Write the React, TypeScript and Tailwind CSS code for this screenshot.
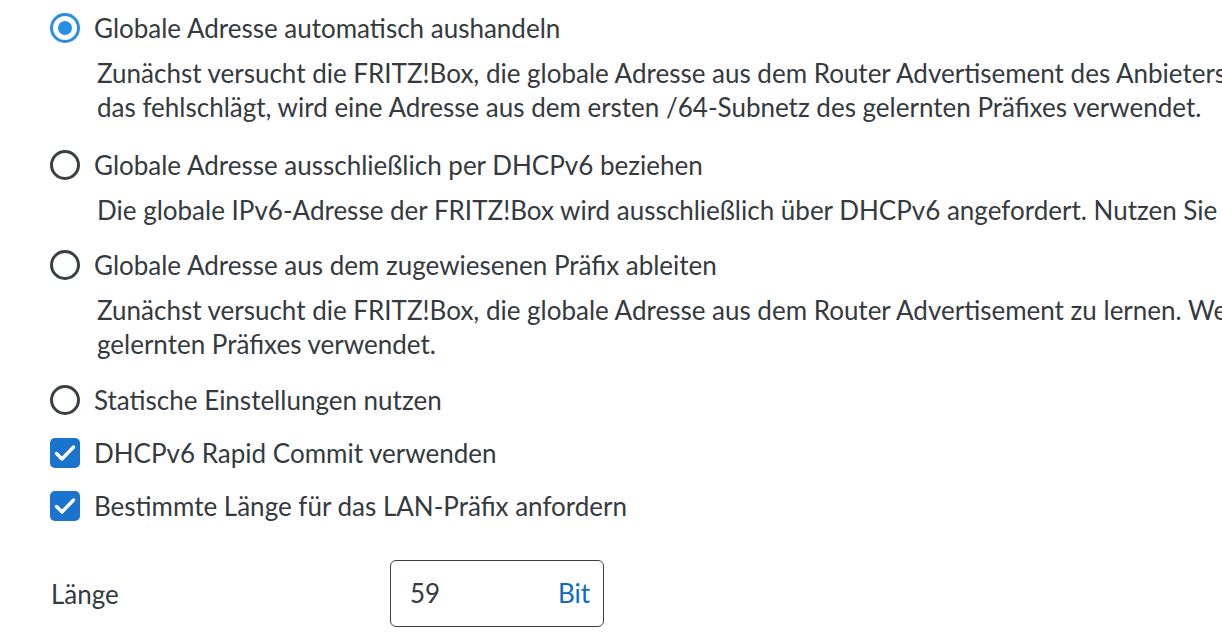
const font = { fontFamily: 'Lato, "Noto Sans", sans-serif' };

function Radio({ checked }: { checked?: boolean }) {
  return (
    <span className={`flex h-[30px] w-[30px] shrink-0 items-center justify-center rounded-full border-[3px] ${checked ? "border-[#2a8ee2]" : "border-[#3a3f45]"}`}>
      {checked && <span className="h-[14px] w-[14px] rounded-full bg-[#2a8ee2]" />}
    </span>
  );
}

function Checkbox() {
  return (
    <span className="flex h-[30px] w-[30px] shrink-0 items-center justify-center rounded-[5px] bg-[#1a73cc]">
      <svg width="26" height="26" viewBox="0 0 26 26" fill="none">
        <path d="M4.5 13.5l5.5 5.5L21.5 7" stroke="white" strokeWidth="3.4" strokeLinecap="round" strokeLinejoin="round" />
      </svg>
    </span>
  );
}

function Option({ control, label }: { control: React.ReactNode; label: string }) {
  return (
    <div className="flex h-[34px] items-center gap-[14px] whitespace-nowrap">
      {control}
      <span>{label}</span>
    </div>
  );
}

function Desc({ children }: { children: React.ReactNode }) {
  return <p className="mt-[11px] whitespace-nowrap pl-[47px] leading-[34px]">{children}</p>;
}

export default function App() {
  return (
    <div className="h-[642px] w-[1222px] overflow-hidden bg-white pl-[50px] pt-[11px] text-[26px] text-[#343a40]" style={font}>
      <div className="w-[1400px]">
        <Option control={<Radio checked />} label="Globale Adresse automatisch aushandeln" />
        <Desc>
          Zunächst versucht die FRITZ!Box, die globale Adresse aus dem Router Advertisement des Anbieters zu lernen.
          <br />
          das fehlschlägt, wird eine Adresse aus dem ersten /64-Subnetz des gelernten Präfixes verwendet.
        </Desc>
        <div className="mt-[24px]">
          <Option control={<Radio />} label="Globale Adresse ausschließlich per DHCPv6 beziehen" />
        </div>
        <Desc>
          Die globale IPv6-Adresse der FRITZ!Box wird ausschließlich über DHCPv6 angefordert. Nutzen Sie diese
        </Desc>
        <div className="mt-[21px]">
          <Option control={<Radio />} label="Globale Adresse aus dem zugewiesenen Präfix ableiten" />
        </div>
        <Desc>
          Zunächst versucht die FRITZ!Box, die globale Adresse aus dem Router Advertisement zu lernen. Wenn das
          <br />
          gelernten Präfixes verwendet.
        </Desc>
        <div className="mt-[22px]">
          <Option control={<Radio />} label="Statische Einstellungen nutzen" />
        </div>
        <div className="mt-[19px]">
          <Option control={<Checkbox />} label="DHCPv6 Rapid Commit verwenden" />
        </div>
        <div className="mt-[19px]">
          <Option control={<Checkbox />} label="Bestimmte Länge für das LAN-Präfix anfordern" />
        </div>
        <div className="mt-[37px] flex items-center">
          <span className="w-[340px] pl-[1px] pt-[2px]">Länge</span>
          <div className="flex h-[67px] w-[214px] items-center justify-between rounded-[6px] border border-[#3a3f45] pl-[19px] pr-[13px]">
            <span>59</span>
            <span className="text-[#0a6cc4]">Bit</span>
          </div>
        </div>
      </div>
    </div>
  );
}
